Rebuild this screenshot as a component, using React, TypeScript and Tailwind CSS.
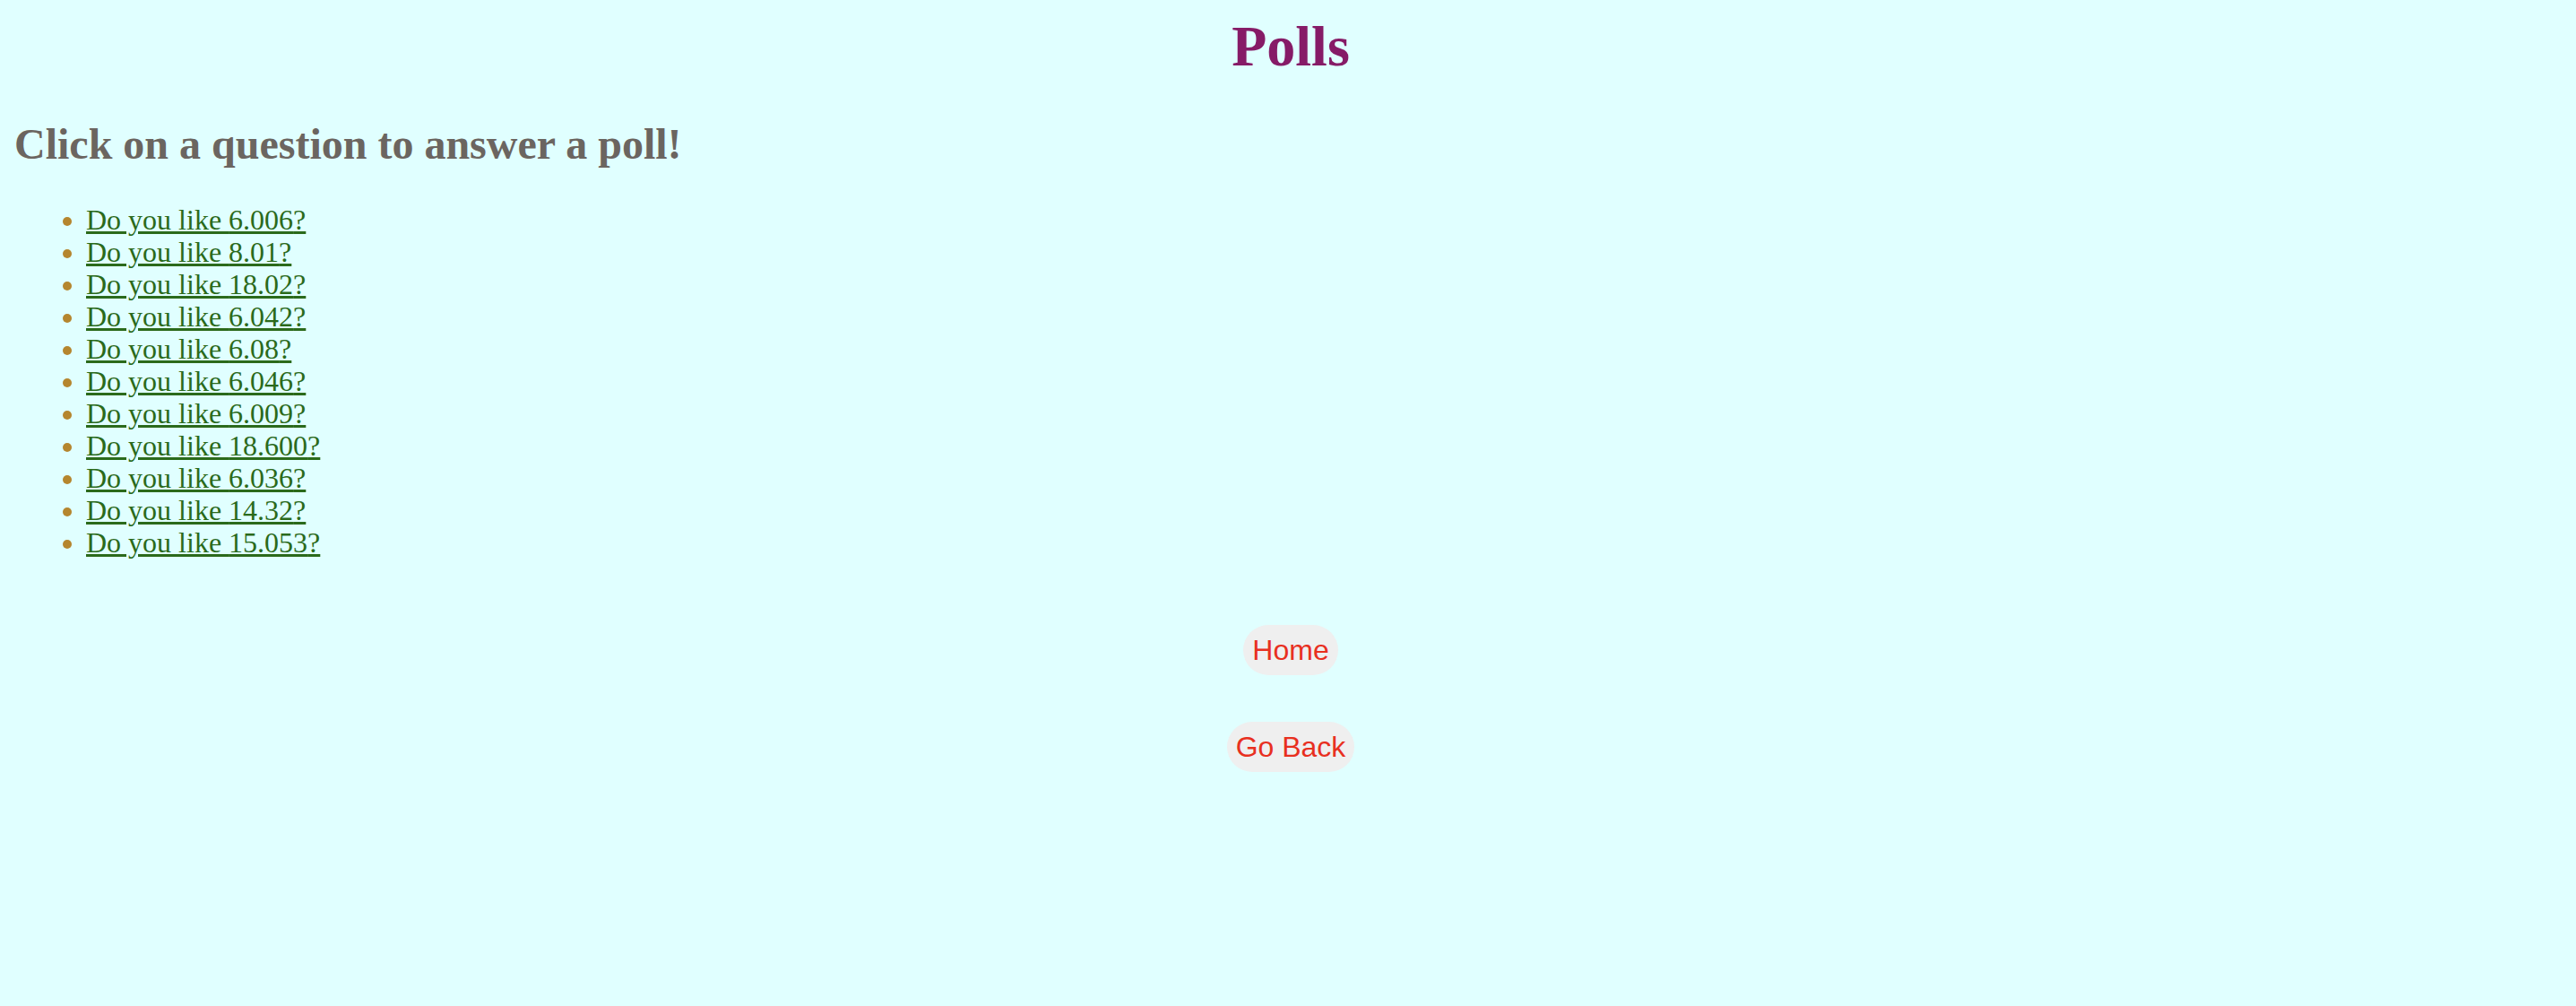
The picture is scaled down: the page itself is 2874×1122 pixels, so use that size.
const questions = [
  '6.006',
  '8.01',
  '18.02',
  '6.042',
  '6.08',
  '6.046',
  '6.009',
  '18.600',
  '6.036',
  '14.32',
  '15.053',
]

export default function App() {
  return (
    <div className="min-h-screen bg-[#e0ffff] px-4 pt-[15px] font-['Liberation_Serif',serif]">
      <h1 className="pl-[6px] text-center text-[64px] font-bold leading-[1.15] text-[#861b67]">Polls</h1>

      <h2 className="mt-[44px] text-[48px] font-bold leading-[1.15] text-[#6b6560]">
        Click on a question to answer a poll!
      </h2>

      <ul className="mt-[39px] list-disc pl-[80px] marker:text-[#b5862e]">
        {questions.map((q) => (
          <li key={q} className="text-[32px] leading-[36px]">
            <a href="#" className="text-[#2b6a1b] underline">
              Do you like {q}?
            </a>
          </li>
        ))}
      </ul>

      {/* nav buttons */}
      <div className="mt-[74px] flex flex-col items-center gap-[52px] pl-[6px] font-['Liberation_Sans',Arial,sans-serif]">
        <button className="rounded-full bg-[#efefef] px-[10px] py-[10px] text-[32px] leading-[36px] text-[#e8301f]">
          Home
        </button>
        <button className="rounded-full bg-[#efefef] px-[10px] py-[10px] text-[32px] leading-[36px] text-[#e8301f]">
          Go Back
        </button>
      </div>
    </div>
  )
}
